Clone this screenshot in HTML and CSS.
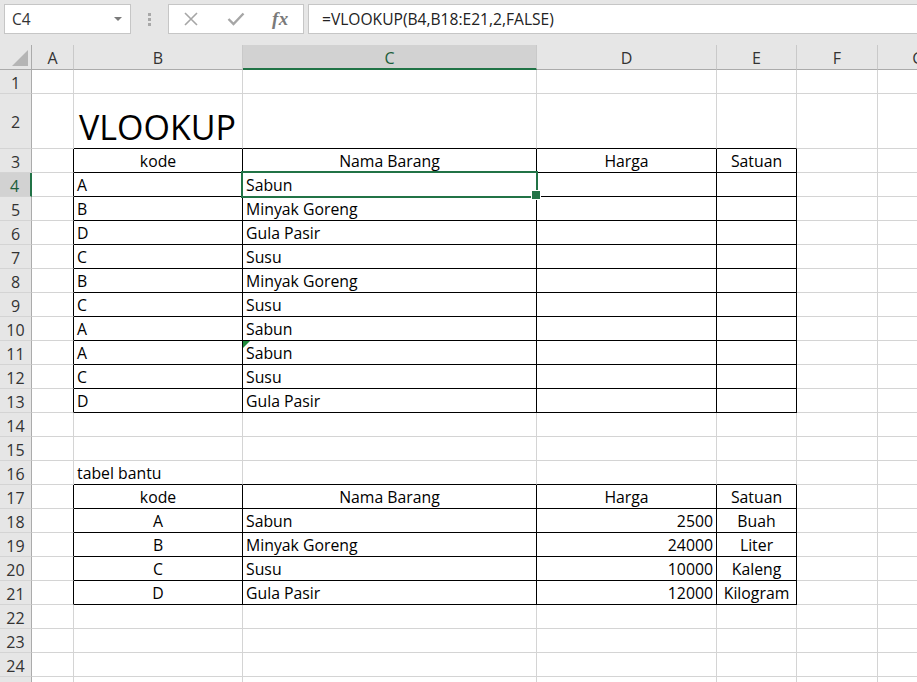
FILE: index.html
```html
<!DOCTYPE html>
<html lang="id">
<head>
<meta charset="utf-8">
<title>VLOOKUP</title>
<link rel="stylesheet" href="styles.css">
</head>
<body>
<div class="topbar">
  <div class="namebox"><span>C4</span><span class="caret"></span></div>
  <div class="grip"><span></span><span></span><span></span></div>
  <div class="fxbox">
    <svg class="ico" width="16" height="16" viewBox="0 0 16 16"><path d="M2 2 L14 14 M14 2 L2 14" stroke="#a6a6a6" stroke-width="1.6" fill="none"/></svg>
    <svg class="ico" width="18" height="16" viewBox="0 0 18 16"><path d="M1.5 8 L6.5 13 L16.5 2.5" stroke="#a6a6a6" stroke-width="2.4" fill="none"/></svg>
    <span class="fx">fx</span>
  </div>
  <div class="formula">=VLOOKUP(B4,B18:E21,2,FALSE)</div>
</div>

<div class="sheet">
  <div class="hd corner"><span class="tri"></span></div><div class="hd">A</div><div class="hd">B</div><div class="hd sel">C</div><div class="hd">D</div><div class="hd">E</div><div class="hd">F</div><div class="hd">G</div>

  <div class="rh">1</div><div class="c"></div><div class="c"></div><div class="c"></div><div class="c"></div><div class="c"></div><div class="c"></div><div class="c"></div>

  <div class="rh">2</div><div class="c"></div><div class="c tt title">VLOOKUP</div><div class="c tt"></div><div class="c tt"></div><div class="c tt"></div><div class="c"></div><div class="c"></div>

  <div class="rh">3</div><div class="c tl"></div><div class="c t ctr">kode</div><div class="c t ctr">Nama Barang</div><div class="c t ctr">Harga</div><div class="c t ctr">Satuan</div><div class="c"></div><div class="c"></div>

  <div class="rh rsel">4</div><div class="c tl"></div><div class="c t">A</div><div class="c t cur">Sabun</div><div class="c t"></div><div class="c t"></div><div class="c"></div><div class="c"></div>

  <div class="rh">5</div><div class="c tl"></div><div class="c t">B</div><div class="c t">Minyak Goreng</div><div class="c t"></div><div class="c t"></div><div class="c"></div><div class="c"></div>

  <div class="rh">6</div><div class="c tl"></div><div class="c t">D</div><div class="c t">Gula Pasir</div><div class="c t"></div><div class="c t"></div><div class="c"></div><div class="c"></div>

  <div class="rh">7</div><div class="c tl"></div><div class="c t">C</div><div class="c t">Susu</div><div class="c t"></div><div class="c t"></div><div class="c"></div><div class="c"></div>

  <div class="rh">8</div><div class="c tl"></div><div class="c t">B</div><div class="c t">Minyak Goreng</div><div class="c t"></div><div class="c t"></div><div class="c"></div><div class="c"></div>

  <div class="rh">9</div><div class="c tl"></div><div class="c t">C</div><div class="c t">Susu</div><div class="c t"></div><div class="c t"></div><div class="c"></div><div class="c"></div>

  <div class="rh">10</div><div class="c tl"></div><div class="c t">A</div><div class="c t">Sabun</div><div class="c t"></div><div class="c t"></div><div class="c"></div><div class="c"></div>

  <div class="rh">11</div><div class="c tl"></div><div class="c t">A</div><div class="c t err">Sabun</div><div class="c t"></div><div class="c t"></div><div class="c"></div><div class="c"></div>

  <div class="rh">12</div><div class="c tl"></div><div class="c t">C</div><div class="c t">Susu</div><div class="c t"></div><div class="c t"></div><div class="c"></div><div class="c"></div>

  <div class="rh">13</div><div class="c tl"></div><div class="c t">D</div><div class="c t">Gula Pasir</div><div class="c t"></div><div class="c t"></div><div class="c"></div><div class="c"></div>

  <div class="rh">14</div><div class="c"></div><div class="c"></div><div class="c"></div><div class="c"></div><div class="c"></div><div class="c"></div><div class="c"></div>

  <div class="rh">15</div><div class="c"></div><div class="c"></div><div class="c"></div><div class="c"></div><div class="c"></div><div class="c"></div><div class="c"></div>

  <div class="rh">16</div><div class="c"></div><div class="c tt">tabel bantu</div><div class="c tt"></div><div class="c tt"></div><div class="c tt"></div><div class="c"></div><div class="c"></div>

  <div class="rh">17</div><div class="c tl"></div><div class="c t ctr">kode</div><div class="c t ctr">Nama Barang</div><div class="c t ctr">Harga</div><div class="c t ctr">Satuan</div><div class="c"></div><div class="c"></div>

  <div class="rh">18</div><div class="c tl"></div><div class="c t ctr">A</div><div class="c t">Sabun</div><div class="c t rt">2500</div><div class="c t ctr">Buah</div><div class="c"></div><div class="c"></div>

  <div class="rh">19</div><div class="c tl"></div><div class="c t ctr">B</div><div class="c t">Minyak Goreng</div><div class="c t rt">24000</div><div class="c t ctr">Liter</div><div class="c"></div><div class="c"></div>

  <div class="rh">20</div><div class="c tl"></div><div class="c t ctr">C</div><div class="c t">Susu</div><div class="c t rt">10000</div><div class="c t ctr">Kaleng</div><div class="c"></div><div class="c"></div>

  <div class="rh">21</div><div class="c tl"></div><div class="c t ctr">D</div><div class="c t">Gula Pasir</div><div class="c t rt">12000</div><div class="c t ctr">Kilogram</div><div class="c"></div><div class="c"></div>

  <div class="rh">22</div><div class="c"></div><div class="c"></div><div class="c"></div><div class="c"></div><div class="c"></div><div class="c"></div><div class="c"></div>

  <div class="rh">23</div><div class="c"></div><div class="c"></div><div class="c"></div><div class="c"></div><div class="c"></div><div class="c"></div><div class="c"></div>

  <div class="rh">24</div><div class="c"></div><div class="c"></div><div class="c"></div><div class="c"></div><div class="c"></div><div class="c"></div><div class="c"></div>

  <div class="rh"></div><div class="c"></div><div class="c"></div><div class="c"></div><div class="c"></div><div class="c"></div><div class="c"></div><div class="c"></div>
</div>
</body>
</html>
```

FILE: styles.css
```css
* { box-sizing: border-box; }
html, body { margin: 0; padding: 0; }
body {
  width: 917px;
  height: 682px;
  overflow: hidden;
  background: #fff;
  font-family: "Open Sans", "Noto Sans", sans-serif;
}

/* formula bar */
.topbar {
  display: flex;
  align-items: flex-start;
  height: 45px;
  background: #e6e6e6;
  padding: 4px 0 0 4px;
}
.namebox {
  width: 127px;
  height: 30px;
  background: #fff;
  border: 1px solid #c6c6c6;
  display: flex;
  align-items: center;
  justify-content: space-between;
  padding: 0 8px 0 7px;
  font-size: 15.5px;
  color: #333;
}
.caret {
  width: 0;
  height: 0;
  border-left: 4px solid transparent;
  border-right: 4px solid transparent;
  border-top: 4px solid #7a7a7a;
}
.grip {
  width: 37px;
  height: 30px;
  display: flex;
  flex-direction: column;
  align-items: center;
  justify-content: center;
  gap: 2px;
}
.grip span { width: 3px; height: 3px; background: #a8a8a8; }
.fxbox {
  width: 136px;
  height: 30px;
  background: #fff;
  border: 1px solid #c6c6c6;
  display: flex;
  align-items: center;
  padding-left: 14px;
  gap: 28px;
}
.ico { display: block; }
.fx {
  font-family: "Liberation Serif", serif;
  font-style: italic;
  font-weight: bold;
  font-size: 19px;
  color: #7a7a7a;
  letter-spacing: 0.5px;
  margin-left: -1px;
}
.formula {
  flex: 1;
  margin-left: 4px;
  height: 30px;
  background: #fff;
  border: 1px solid #c6c6c6;
  border-right: none;
  padding-left: 13px;
  display: flex;
  align-items: center;
  font-size: 15.6px;
  color: #222;
}

/* sheet grid */
.sheet {
  display: grid;
  grid-template-columns: 32px 42px 169px 294px 180px 80px 81px 81px;
  grid-template-rows: 25px 24px 55px repeat(23, 24px);
  width: 959px;
}
.hd {
  background: #e6e6e6;
  border-right: 1px solid #c9c9c9;
  border-bottom: 1px solid #ababab;
  display: flex;
  align-items: center;
  justify-content: center;
  font-size: 16px;
  color: #333;
  padding-top: 2px;
}
.hd.sel {
  background: #d2d2d2;
  border-bottom: 2px solid #217346;
  color: #1c5e3a;
  padding-top: 3px;
}
.corner {
  border-right-color: #ababab;
  align-items: flex-end;
  justify-content: flex-end;
  padding: 0 3px 3px 0;
}
.tri {
  width: 16px;
  height: 16px;
  background: #b5b5b5;
  clip-path: polygon(100% 0, 100% 100%, 0 100%);
}
.rh {
  background: #e6e6e6;
  border-right: 1px solid #ababab;
  border-bottom: 1px solid #d4d4d4;
  display: flex;
  align-items: center;
  justify-content: center;
  font-size: 16px;
  color: #333;
  padding-top: 2px;
}
.rh.rsel {
  background: #d2d2d2;
  border-right: 2px solid #217346;
  color: #1c5e3a;
  padding-right: 1px;
}
.c {
  border-right: 1px solid #d4d4d4;
  border-bottom: 1px solid #d4d4d4;
  display: flex;
  align-items: center;
  padding: 2px 3px 0;
  white-space: nowrap;
  font-size: 15.8px;
  line-height: 21px;
  color: #000;
}
.t { border-right-color: #000; border-bottom-color: #000; }
.tl { border-right-color: #000; }
.tt { border-bottom-color: #000; }
.ctr { justify-content: center; }
.rt { justify-content: flex-end; }
.title {
  align-items: flex-end;
  font-size: 34px;
  line-height: 40px;
  padding: 0 0 1px 5px;
  overflow: visible;
}
.cur { position: relative; }
.cur::after {
  content: "";
  position: absolute;
  left: -2px;
  top: -2px;
  right: -2px;
  bottom: -2px;
  border: 2px solid #217346;
  z-index: 2;
}
.cur::before {
  content: "";
  position: absolute;
  right: -5px;
  bottom: -4px;
  width: 8px;
  height: 8px;
  background: #217346;
  border: 1px solid #fff;
  z-index: 3;
}
.err { position: relative; }
.err::before {
  content: "";
  position: absolute;
  left: 0;
  top: 0;
  width: 7px;
  height: 7px;
  background: #1f8b3b;
  clip-path: polygon(0 0, 100% 0, 0 100%);
}
```
